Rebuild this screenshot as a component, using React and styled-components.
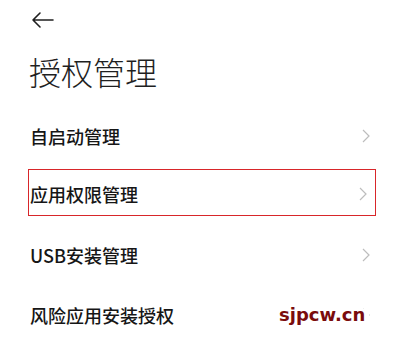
import React from "react";
import styled, { createGlobalStyle } from "styled-components";

const GlobalStyle = createGlobalStyle`
	html, body {
		margin: 0;
		padding: 0;
		background: #ffffff;
	}
	body {
		font-family: "Noto Sans CJK SC", "Noto Sans", sans-serif;
		color: #1c1c1c;
	}
`;

const items = [
	{ label: "自启动管理" },
	{ label: "应用权限管理", marked: true },
	{ label: "USB安装管理" },
	{ label: "风险应用安装授权" },
];

function BackArrow() {
	return (
		<svg width="24" height="18" viewBox="0 0 24 18" fill="none">
			<path
				d="M22 9H2M9 2L2 9L9 16"
				stroke="#1f1f1f"
				strokeWidth="1.6"
				strokeLinecap="round"
				strokeLinejoin="round"
			/>
		</svg>
	);
}

function Chevron() {
	return (
		<svg width="8" height="14" viewBox="0 0 8 14" fill="none">
			<path d="M1 1L7 7L1 13" stroke="#bdbdbd" strokeWidth="1.2" />
		</svg>
	);
}

function App() {
	return (
		<Screen>
			<GlobalStyle />
			<Header>
				<BackArrow />
			</Header>
			<Title>授权管理</Title>
			<List>
				{items.map((item) => (
					<Row key={item.label} $marked={item.marked}>
						<Label>{item.label}</Label>
						<Chevron />
					</Row>
				))}
			</List>
			<Watermark>sjpcw.cn</Watermark>
		</Screen>
	);
}

const Screen = styled.div`
	position: relative;
	width: 400px;
	height: 355px;
	overflow: hidden;
	background: #fff;
`;

const Header = styled.div`
	display: flex;
	align-items: center;
	height: 22px;
	padding: 9px 0 0 31px;
`;

const Title = styled.h1`
	margin: 0;
	padding: 18px 0 0 29px;
	font-size: 32px;
	font-weight: 300;
	line-height: 44px;
	letter-spacing: 0;
	color: #1f1f1f;
`;

const List = styled.div`
	display: flex;
	flex-direction: column;
	padding: 13px 24px 0 28px;
`;

const Row = styled.div`
	display: flex;
	align-items: center;
	justify-content: space-between;
	box-sizing: border-box;
	height: ${(p) => (p.$marked ? "47px" : "60px")};
	margin: ${(p) => (p.$marked ? "3px 0 9px" : "0")};
	padding: ${(p) => (p.$marked ? "3px 8px 0 1px" : "0 6px 0 2px")};
	border: ${(p) => (p.$marked ? "1.5px solid #d8262a" : "none")};
`;

const Label = styled.span`
	font-size: 18px;
	font-weight: 500;
	line-height: 24px;
	color: #161616;
`;

/* watermark sits on a white patch that hides the last chevron */
const Watermark = styled.div`
	position: absolute;
	left: 275px;
	top: 309px;
	padding: 0 4px 6px;
	background: #fff;
	font-family: "DejaVu Sans", "Noto Sans", sans-serif;
	font-size: 18px;
	font-weight: 700;
	line-height: 12px;
	color: #7a0c0c;
`;

export default App;
